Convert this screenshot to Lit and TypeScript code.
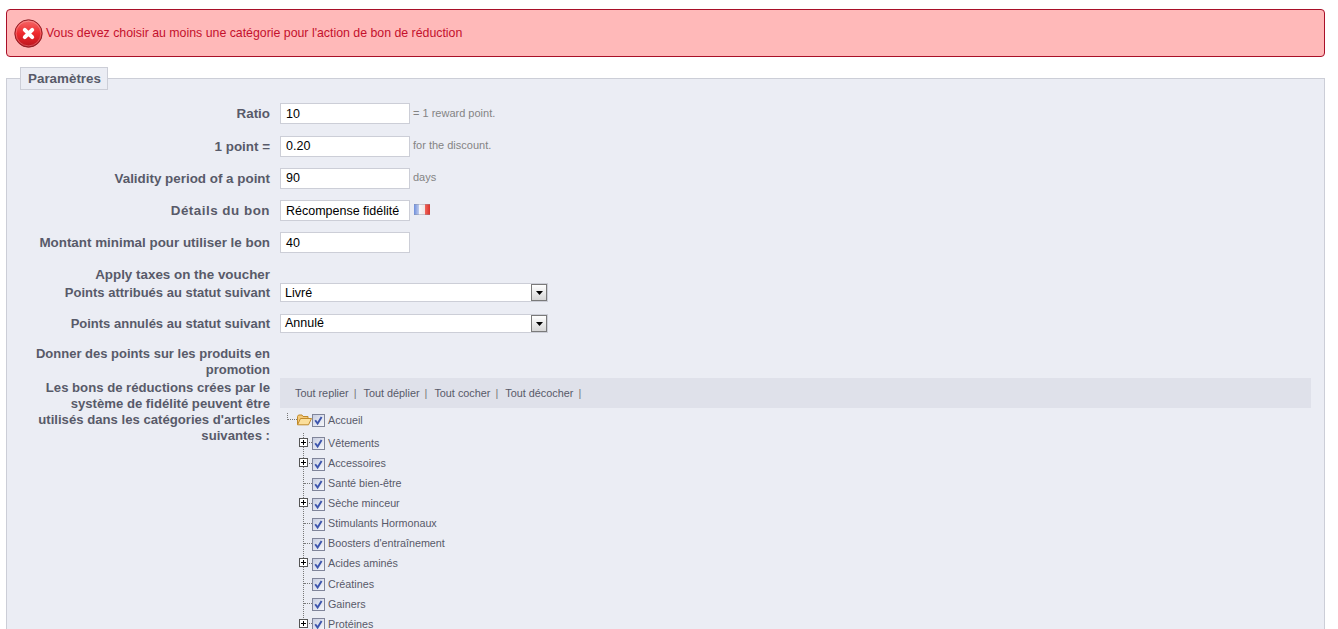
import { LitElement, html, css, svg } from "lit";
import { customElement } from "lit/decorators.js";

const rows: [string, boolean][] = [
  ["Vêtements", true],
  ["Accessoires", true],
  ["Santé bien-être", false],
  ["Sèche minceur", true],
  ["Stimulants Hormonaux", false],
  ["Boosters d'entraînement", false],
  ["Acides aminés", true],
  ["Créatines", false],
  ["Gainers", false],
  ["Protéines", true],
];

const check = html`<svg class="cb" width="13" height="13" viewBox="0 0 13 13">
  <defs><linearGradient id="g" x1="0" y1="0" x2="1" y2="1"><stop offset="0" stop-color="#c6cce0"/><stop offset="1" stop-color="#f8f9fc"/></linearGradient></defs>
  <rect x=".5" y=".5" width="12" height="12" fill="url(#g)" stroke="#80859a"/>
  <path d="M3.2 6.2 5.6 9.6 9.6 3" fill="none" stroke="#3d55ad" stroke-width="1.9"/>
</svg>`;

const plus = svg`<svg class="pl" width="9" height="9" viewBox="0 0 9 9">
  <rect x=".5" y=".5" width="8" height="8" fill="#fff" stroke="#555"/>
  <path d="M2 4.5h5M4.5 2v5" stroke="#000"/>
</svg>`;

const arrow = html`<span class="arr"><svg width="7" height="4" viewBox="0 0 7 4"><path d="M0 0h7L3.5 4z" fill="#000"/></svg></span>`;

@customElement("app-root")
export class AppRoot extends LitElement {
  static styles = css`
    :host { display: block; height: 629px; overflow: hidden; padding: 9px 13px 0 6px; box-sizing: border-box;
      font-family: "Liberation Sans", Arial, sans-serif; font-size: 12px; color: #585a69; background: #fff; }
    .alert { height: 48px; box-sizing: border-box; border: 1px solid #a80f28; border-radius: 4px; background: #ffb9b9;
      display: flex; align-items: center; gap: 3px; padding-left: 7px; color: #c4102c; font-size: 12.33px; }
    .alert svg { flex: none; }
    fieldset { margin: 10px 0 0; padding: 13px 0 0 13px; border: 1px solid #ccced7; background: #ebedf4; min-width: 0; box-sizing: border-box; }
    legend { margin-left: 0; padding: 0 6px 0 7px; height: 23px; line-height: 21px; box-sizing: border-box; border: 1px solid #ccced7;
      background: #ebedf4; font-size: 13.4px; font-weight: bold; color: #585a69; }
    .row { display: flex; align-items: center; height: 21px; margin-bottom: 11px; }
    .row.first { margin-bottom: 12px; }
    .row.pre { margin-bottom: 13px; }
    .row.tight { margin-bottom: 0; height: 17px; }
    .row.sel { height: 19px; margin-bottom: 12px; }
    .row.sel.last { margin-bottom: 13px; }
    label { flex: none; width: 250px; text-align: right; font-size: 13.4px; font-weight: bold; line-height: 16px; margin-right: 10px; color: #585a69; }
    label.n { font-size: 13px; }
    label.w { letter-spacing: .5px; }
    label.c { font-size: 13.15px; width: 240px; margin-left: 10px; }
    .in { width: 130px; height: 21px; box-sizing: border-box; border: 1px solid #ccced7; background: #fff; color: #000; padding-left: 5px;
      font-size: 12.5px; line-height: 20px; white-space: nowrap; }
    .in.up { line-height: 18px; }
    .note { margin-left: 3px; font-size: 11px; color: #848484; margin-bottom: 1px; }
    .note.up { margin-bottom: 3px; }
    .flag { display: block; margin-left: 4px; margin-bottom: 2px; }
    .select { width: 268px; height: 19px; box-sizing: border-box; border: 1px solid #ccced7; background: #fff; color: #000; padding-left: 4px;
      font-size: 12.5px; line-height: 17px; display: flex; justify-content: space-between; align-items: center; }
    .select .low { margin-top: 1px; }
    .arr { width: 16px; height: 17px; box-sizing: border-box; border: 1px solid #7a7a7a; background: linear-gradient(#fff, #d6d6d6);
      display: flex; align-items: center; justify-content: center; flex: none; }
    .promo { display: flex; }
    .cats { display: flex; align-items: flex-start; }
    .cats label { margin-top: 2px; }
    .main { flex: 1; min-width: 0; margin-right: 13px; }
    .bar { height: 30px; background: #dfe1ea; display: flex; align-items: center; padding-left: 15px; font-size: 10.85px; color: #585a69; white-space: nowrap; }
    .bar span { margin-right: 7px; }
    .bar span::after { content: "|"; color: #777; margin-left: 5px; }
    .root { display: flex; align-items: center; height: 22px; margin-top: 1px; margin-left: 7px; position: relative; font-size: 10.75px; }
    .root::before { content: ""; width: 10px; height: 7px; margin-top: -7px; border-left: 1px dotted #777; border-bottom: 1px dotted #777; box-sizing: border-box; }
    .tree { margin: 1.96px 0 0 23px; padding: 0; list-style: none; border-left: 1px dotted #777; font-size: 10.75px; }
    .tree li { display: flex; align-items: center; height: 20.08px; position: relative; }
    .dash { width: 8px; border-top: 1px dotted #777; flex: none; }
    .tree .pl { position: absolute; left: -5px; top: 5px; }
    .tree .cb { margin-top: 2px; }
    .name { margin-left: 3px; white-space: nowrap; color: #585a69; line-height: 12px; }
  `;

  render() {
    return html`
      <div class="alert">
        <svg width="29" height="29" viewBox="0 0 29 29">
          <defs>
            <linearGradient id="r" x1="0" y1="0" x2="0" y2="1"><stop offset="0" stop-color="#f56a6a"/><stop offset=".5" stop-color="#ee2a2e"/><stop offset="1" stop-color="#b9141c"/></linearGradient>
          </defs>
          <circle cx="14.5" cy="14.5" r="13.7" fill="url(#r)" stroke="#8e2027" stroke-width="1"/>
          <circle cx="14.5" cy="14.5" r="12.4" fill="none" stroke="#fff" stroke-opacity=".25"/>
          <path d="M10.8 10.8 18.2 18.2M18.2 10.8 10.8 18.2" stroke="#fff" stroke-width="4" stroke-linecap="round"/>
        </svg>
        <span>Vous devez choisir au moins une catégorie pour l'action de bon de réduction</span>
      </div>
      <fieldset>
        <legend>Paramètres</legend>
        <div class="row first"><label>Ratio</label><div class="in">10</div><span class="note">= 1 reward point.</span></div>
        <div class="row"><label>1 point =</label><div class="in up">0.20</div><span class="note up">for the discount.</span></div>
        <div class="row"><label>Validity period of a point</label><div class="in up">90</div><span class="note up">days</span></div>
        <div class="row"><label class="w">Détails du bon</label><div class="in">Récompense fidélité</div>
          <svg class="flag" width="16" height="11" viewBox="0 0 16 11">
            <defs><linearGradient id="f" x1="0" x2="1" y1="0" y2="0"><stop offset="0" stop-color="#6f8fdc"/><stop offset=".33" stop-color="#c3cfee"/><stop offset=".34" stop-color="#f6f6f8"/><stop offset=".66" stop-color="#efe6e6"/><stop offset=".67" stop-color="#f2665c"/><stop offset="1" stop-color="#d8342c"/></linearGradient></defs>
            <rect width="16" height="11" fill="url(#f)"/>
            <path d="M0 .5h16M0 10.5h16" stroke="#8a8f9e" stroke-opacity=".4"/>
          </svg>
        </div>
        <div class="row pre"><label>Montant minimal pour utiliser le bon</label><div class="in">40</div></div>
        <div class="row tight"><label>Apply taxes on the voucher</label></div>
        <div class="row sel"><label class="n">Points attribués au statut suivant</label><div class="select"><span class="low">Livré</span>${arrow}</div></div>
        <div class="row sel last"><label class="n">Points annulés au statut suivant</label><div class="select"><span>Annulé</span>${arrow}</div></div>
        <div class="promo"><label class="n">Donner des points sur les produits en promotion</label></div>
        <div class="cats">
          <label class="c">Les bons de réductions crées par le système de fidélité peuvent être utilisés dans les catégories d'articles suivantes :</label>
          <div class="main">
            <div class="bar"><span>Tout replier</span><span>Tout déplier</span><span>Tout cocher</span><span>Tout décocher</span></div>
            <div class="root">
              <svg width="15" height="12" viewBox="0 0 15 12">
                <path d="M.5 10.5V2.5l1-1.5h3.5l1 1.5h5v2" fill="#f4c878" stroke="#c08a2a"/>
                <path d="M.5 10.8 3.5 4.5H14.5L11.5 10.8z" fill="#fbdf9c" stroke="#c08a2a"/>
              </svg>
              ${check}<span class="name">Accueil</span>
            </div>
            <ul class="tree">
              ${rows.map(([n, p]) => html`<li>${p ? plus : ""}<span class="dash"></span>${check}<span class="name">${n}</span></li>`)}
            </ul>
          </div>
        </div>
      </fieldset>
    `;
  }
}
